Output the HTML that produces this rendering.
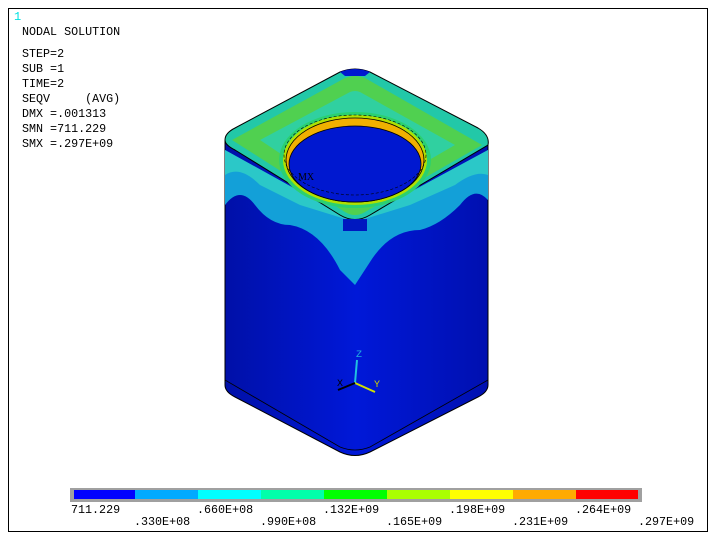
<!DOCTYPE html>
<html><head><style>
body{margin:0;background:#fff;width:716px;height:542px;overflow:hidden;font-family:"Liberation Mono",monospace}
svg{position:absolute;left:0;top:0}
text{white-space:pre}
</style></head><body>
<svg width="716" height="542" viewBox="0 0 716 542" xml:space="preserve">
<defs>
<linearGradient id="bd" x1="0" x2="1" y1="0" y2="0">
<stop offset="0" stop-color="#0010a8"/><stop offset="0.5" stop-color="#0018d8"/><stop offset="1" stop-color="#0010b0"/>
</linearGradient>
</defs>
<rect x="8.5" y="8.5" width="699" height="523" fill="#fff" stroke="#000" stroke-width="1"/>
<g font-family="Liberation Mono, monospace" font-size="11.7" fill="#000">
<text x="14" y="20" fill="#00e0e0" font-size="12">1</text>
<text x="22" y="35">NODAL SOLUTION</text>
<text x="22" y="57">STEP=2</text>
<text x="22" y="72">SUB =1</text>
<text x="22" y="87">TIME=2</text>
<text x="22" y="102">SEQV     (AVG)</text>
<text x="22" y="117">DMX =.001313</text>
<text x="22" y="132">SMN =711.229</text>
<text x="22" y="147">SMX =.297E+09</text>
</g>
<!-- body -->
<path d="M225,140 L225,385 Q225,392 235,397 L340,452 Q355,459 370,452 L478,397 Q488,392 488,385 L488,145 Z" fill="url(#bd)" stroke="#000" stroke-width="1"/>
<path d="M225,380 L340,447 Q355,453 370,447 L488,380" fill="none" stroke="#000" stroke-width="0.8"/>
<path d="M225,150 L225,205 Q240,185 255,205 Q270,225 290,225 Q320,230 340,270 L355,285 L370,262 Q390,230 420,230 Q440,225 460,205 Q475,185 488,200 L488,150 L355,222 Z" fill="#13a0d8"/>
<path d="M225,150 L225,175 Q240,165 260,185 L300,205 L355,222 L410,205 L455,185 Q475,170 488,175 L488,150 L355,222 Z" fill="#2bc8c8"/>
<!-- top diamond -->
<path d="M225,140 Q225,133 235,128 L340,72 Q355,66 370,72 L478,128 Q490,135 488,145 L370,215 Q355,224 340,215 L235,150 Q225,145 225,140 Z" fill="#22c8a8" stroke="#000" stroke-width="1"/>
<path d="M232,140 L345,78 Q355,74 365,78 L482,145 L365,212 Q355,218 345,212 Z" fill="#50d050"/>
<path d="M260,140 L350,92 Q355,90 360,92 L455,145 L360,200 Q355,203 350,200 Z" fill="#30d0a0"/>
<path d="M340,72 Q355,66 370,72 L365,76 L345,76 Z" fill="#0018d0"/>
<rect x="343" y="219" width="24" height="12" fill="#0018c0"/>
<!-- ring -->
<ellipse cx="355" cy="160" rx="76" ry="48" fill="#2bd070"/>
<ellipse cx="355" cy="160" rx="72" ry="45" fill="#b0e000"/>
<ellipse cx="355" cy="160" rx="69" ry="42" fill="#f0b000" stroke="#000" stroke-width="0.8"/>
<ellipse cx="355" cy="164" rx="66" ry="38" fill="#0018d0" stroke="#000" stroke-width="0.8"/>
<ellipse cx="355" cy="155" rx="71" ry="40" fill="none" stroke="#000" stroke-width="0.6" stroke-dasharray="3,2"/>
<text x="298" y="180" font-family="Liberation Serif,serif" font-size="10">MX</text>
<!-- axes -->
<line x1="355" y1="383" x2="357" y2="360" stroke="#20c0e0" stroke-width="2"/>
<line x1="355" y1="383" x2="375" y2="392" stroke="#d0e000" stroke-width="2"/>
<line x1="355" y1="383" x2="338" y2="390" stroke="#000" stroke-width="2"/>
<text x="356" y="357" fill="#20b0e0" font-size="10">Z</text>
<text x="374" y="387" fill="#c8d000" font-size="10">Y</text>
<text x="337" y="386" font-size="10">X</text>
<!-- colorbar -->
<rect x="70" y="488" width="572" height="14" fill="#a0a0a0"/>
<rect x="74" y="490" width="61" height="9" fill="#0000ff"/>
<rect x="135" y="490" width="63" height="9" fill="#00aaff"/>
<rect x="198" y="490" width="63" height="9" fill="#00ffff"/>
<rect x="261" y="490" width="63" height="9" fill="#00ffaa"/>
<rect x="324" y="490" width="63" height="9" fill="#00ff00"/>
<rect x="387" y="490" width="63" height="9" fill="#aaff00"/>
<rect x="450" y="490" width="63" height="9" fill="#ffff00"/>
<rect x="513" y="490" width="63" height="9" fill="#ffaa00"/>
<rect x="576" y="490" width="62" height="9" fill="#ff0000"/>
<g font-family="Liberation Mono, monospace" font-size="11.7" fill="#000">
<text x="71" y="513">711.229</text>
<text x="134" y="525">.330E+08</text>
<text x="197" y="513">.660E+08</text>
<text x="260" y="525">.990E+08</text>
<text x="323" y="513">.132E+09</text>
<text x="386" y="525">.165E+09</text>
<text x="449" y="513">.198E+09</text>
<text x="512" y="525">.231E+09</text>
<text x="575" y="513">.264E+09</text>
<text x="638" y="525">.297E+09</text>
</g>
</svg>
</body></html>
